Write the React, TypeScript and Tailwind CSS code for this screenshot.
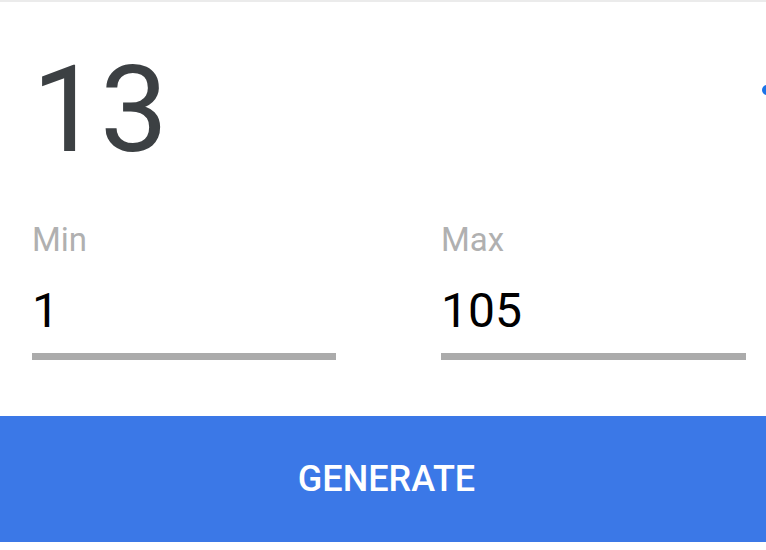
import React from "react";

const Field = ({ label, value, className }: { label: string; value: string; className?: string }) => (
  <div className={className}>
    <div className="h-[33px] text-[33px] leading-none text-[#b0b0b0]">{label}</div>
    <div className="mt-[31px] h-[48px] text-[48px] leading-none text-black">{value}</div>
    <div className="mt-[18px] h-[7px] bg-[#ababab]" />
  </div>
);

export default function App() {
  return (
    <div
      className="relative w-[766px] h-[550px] overflow-hidden bg-white border-t-2 border-[#ebebeb]"
      style={{ fontFamily: "Roboto, 'Liberation Sans', sans-serif" }}
    >
      <div className="mt-[48px] h-[121px] pl-[32px] text-[121px] leading-none text-[#3c4043]">13</div>
      <div className="absolute left-[762px] top-[83px] h-[10px] w-[10px] rounded-full bg-[#1a73e8]" />

      <div className="mt-[52px] flex pl-[32px]">
        <Field label="Min" value="1" className="w-[304px]" />
        <Field label="Max" value="105" className="ml-[105px] w-[305px]" />
      </div>

      <button
        type="button"
        className="mt-[56px] flex h-[126px] w-full items-center justify-center bg-[#3b78e7] pl-[7px] text-[36px] font-medium text-white"
      >
        GENERATE
      </button>
    </div>
  );
}
